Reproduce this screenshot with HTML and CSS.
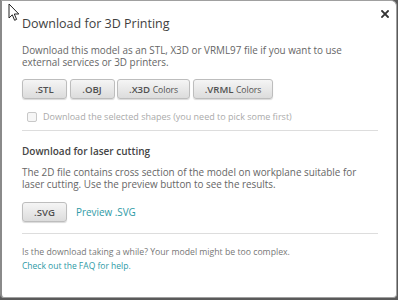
FILE: index.html
```html
<!DOCTYPE html>
<html>
<head>
<meta charset="utf-8">
<link rel="stylesheet" href="styles.css">
</head>
<body>
<div class="modal">
  <button class="close" aria-label="Close">
    <svg width="8" height="8" viewBox="0 0 8 8"><path d="M1 1 L7 7 M7 1 L1 7" stroke="#333" stroke-width="1.8" stroke-linecap="square"/></svg>
  </button>
  <h1 class="title">Download for 3D Printing</h1>
  <p class="text">Download this model as an STL, X3D or VRML97 file if you want to use external services or 3D printers.</p>
  <div class="buttons">
    <button class="btn">.STL</button>
    <button class="btn">.OBJ</button>
    <button class="btn">.X3D <span class="small">Colors</span></button>
    <button class="btn">.VRML <span class="small">Colors</span></button>
  </div>
  <label class="check"><span class="box"></span>Download the selected shapes (you need to pick some first)</label>
  <hr class="rule">
  <h2 class="subtitle">Download for laser cutting</h2>
  <p class="text text2">The 2D file contains cross section of the model on workplane suitable for laser cutting. Use the preview button to see the results.</p>
  <div class="buttons buttons2">
    <button class="btn">.SVG</button>
    <a class="link preview">Preview .SVG</a>
  </div>
  <hr class="rule rule2">
  <p class="foot">Is the download taking a while? Your model might be too complex.<br><a class="link">Check out the FAQ for help.</a></p>
</div>
<svg class="cursor" width="13" height="20" viewBox="0 0 13 20"><path d="M1 1 L1 15 L4.3 11.8 L6.6 17.3 L8.6 16.4 L6.3 11 L10.8 11 Z" fill="#fff" stroke="#222" stroke-width="1" stroke-linejoin="miter"/></svg>
</body>
</html>
```

FILE: styles.css
```css
html, body {
  margin: 0;
  padding: 0;
  background: #5a5a5a;
  width: 398px;
  height: 300px;
  overflow: hidden;
}
.modal {
  position: relative;
  box-sizing: border-box;
  width: 397px;
  height: 298px;
  background: #fff;
  border: 1px solid #a0a0a0;
  border-left: 2px solid #8a8a8a;
  border-radius: 0 6px 4px 4px;
  padding: 13px 20px 0 20px;
  font-family: "Open Sans", "DejaVu Sans", sans-serif;
  color: #666;
}
.close {
  position: absolute;
  top: 9px;
  right: 7px;
  border: 0;
  background: none;
  padding: 0;
  width: 8px;
  height: 8px;
  display: flex;
}
.title {
  margin: 0;
  font-size: 12.5px;
  font-weight: 400;
  color: #3f3f3f;
  line-height: 20px;
}
.text {
  margin: 10px 0 0;
  font-size: 9.9px;
  line-height: 12px;
  color: #666;
}
.buttons {
  display: flex;
  align-items: center;
  gap: 2.5px;
  margin-top: 11px;
}
.btn {
  height: 20px;
  box-sizing: border-box;
  border: 1px solid #bdbdbd;
  border-radius: 3px;
  background: linear-gradient(#f5f5f5, #dcdcdc);
  box-shadow: 0 1px 1px rgba(0,0,0,0.15);
  font-family: "Open Sans", "DejaVu Sans", sans-serif;
  font-size: 9.6px;
  font-weight: 600;
  color: #505050;
  padding: 0 11px;
  min-width: 45px;
}
.small {
  font-size: 8.6px;
  font-weight: 400;
}
.check {
  display: flex;
  align-items: center;
  gap: 6px;
  margin: 11px 0 0 5px;
  font-size: 9px;
  color: #aaa;
  line-height: 14px;
}
.box {
  width: 8px;
  height: 8px;
  border: 1px solid #c8c8c8;
  border-radius: 2px;
  background: #f6f6f6;
}
.rule {
  margin: 6px 0 0 0;
  width: 356px;
  border: 0;
  border-top: 1px solid #ddd;
}
.subtitle {
  margin: 12px 0 0;
  font-size: 10px;
  font-weight: 600;
  color: #444;
  line-height: 16px;
}
.text2 {
  margin-top: 7px;
}
.buttons2 {
  margin-top: 12px;
  gap: 9px;
}
.link {
  color: #2e9aa6;
  font-size: 9.9px;
}
.rule2 {
  margin-top: 11px;
}
.foot {
  margin: 12px 0 0;
  font-size: 8.7px;
  line-height: 13px;
  color: #777;
}
.foot .link {
  font-size: 8.5px;
}
.cursor {
  position: absolute;
  left: 8px;
  top: 3px;
}
```
